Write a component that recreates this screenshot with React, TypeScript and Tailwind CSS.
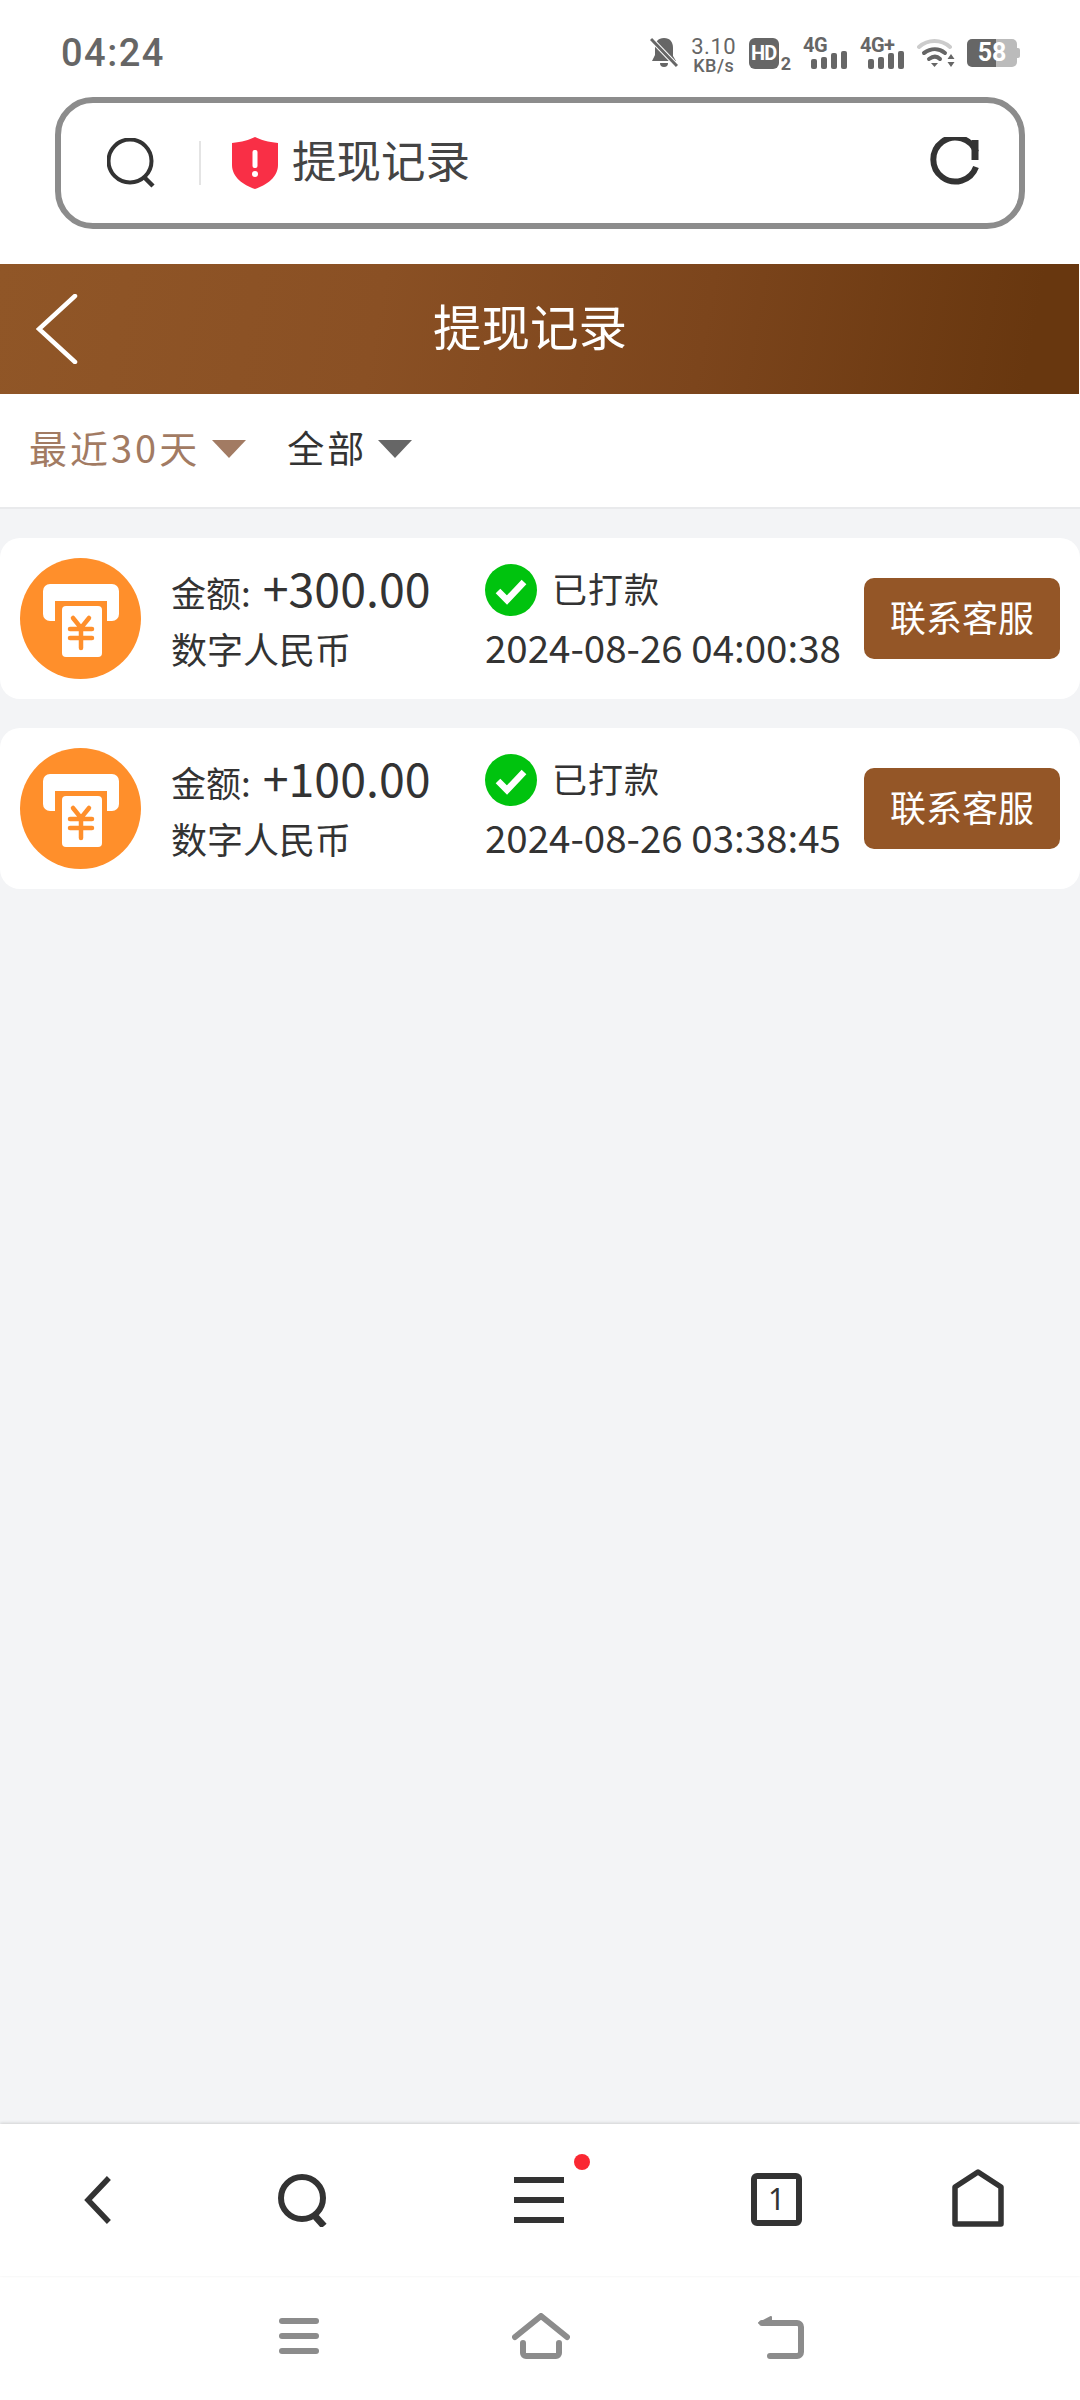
const FONT = "font-['Noto_Sans_CJK_SC','Noto_Sans',sans-serif]";

function SignalBars() {
  return (
    <svg width="36" height="18" viewBox="0 0 36 18" fill="#666">
      <rect x="0" y="8" width="6" height="10" rx="2" />
      <rect x="10" y="6" width="6" height="12" rx="2" />
      <rect x="20" y="2" width="6" height="16" rx="2" />
      <rect x="30" y="0" width="6" height="18" rx="2" />
    </svg>
  );
}

function StatusBar() {
  return (
    <div className="flex items-center h-[97px] pl-[61px] pr-[60px] pt-[9px] text-[#666] font-['Roboto',sans-serif]">
      <span className="text-[38px] leading-none font-medium tracking-[1.5px]">04:24</span>
      <div className="ml-auto flex items-center">
        <svg width="28" height="32" viewBox="0 0 28 32" fill="#666">
          <path d="M14 1c6 0 9 4 9 10v8l3 5H2l3-6v-7c0-6 3-10 9-10z" />
          <path d="M10 26h8a4 4 0 0 1-8 0z" />
          <path d="M1 2l26 27" stroke="#fff" strokeWidth="5" />
          <path d="M1 2l26 27" stroke="#666" strokeWidth="3" />
        </svg>
        <div className="ml-[13px] mt-[3px] flex flex-col items-center w-[46px] leading-none">
          <span className="text-[22px] leading-[19px] tracking-[0.5px]">3.10</span>
          <span className="mt-[2px] text-[18px] leading-[15px] font-medium tracking-[0.5px]">KB/s</span>
        </div>
        <div className="ml-[12px] w-[30px] h-[31px] rounded-[6px] bg-[#666] text-white text-[20px] font-bold leading-[31px] text-center tracking-[-1px]">
          HD
        </div>
        <span className="text-[18px] font-bold self-end leading-[17px] ml-[2px] mb-[1px]">2</span>
        <div className="ml-[12px] w-[44px] h-[31px] flex flex-col">
          <span className="text-[20px] leading-[14px] font-bold tracking-[-0.5px]">4G</span>
          <div className="self-end -mt-[1px]">
            <SignalBars />
          </div>
        </div>
        <div className="ml-[13px] w-[44px] h-[31px] flex flex-col">
          <span className="text-[20px] leading-[14px] font-bold tracking-[-0.5px]">4G+</span>
          <div className="self-end -mt-[1px]">
            <SignalBars />
          </div>
        </div>
        <svg className="ml-[13px]" width="38" height="30" viewBox="0 0 38 30" fill="none">
          <path d="M2 9C11 1 24 1 33 9" stroke="#ccc" strokeWidth="4" strokeLinecap="round" />
          <path d="M7 15c7-5 15-5 21 0" stroke="#666" strokeWidth="4" strokeLinecap="round" />
          <path d="M12 21c4-3 8-3 11 0" stroke="#666" strokeWidth="4" strokeLinecap="round" />
          <path d="M14 25h7l-3.500 4z" fill="#666" />
          <path d="M34 16l3.500 5h-7zM34 29l3.500-5h-7z" fill="#666" />
        </svg>
        <div className="ml-[12px] flex items-center">
          <div className="w-[50px] h-[28px] rounded-[5px] bg-[linear-gradient(90deg,#666_58%,#bbb_58%)] text-white text-[25px] font-bold leading-[28px] text-center">
            58
          </div>
          <div className="w-[3px] h-[10px] bg-[#bbb] rounded-r-[2px]" />
        </div>
      </div>
    </div>
  );
}

function AddressBar() {
  return (
    <div className="mx-[55px] h-[132px] border-[6px] border-[#8c8c8c] rounded-[38px] flex items-center">
      <svg className="ml-[46px]" width="50" height="50" viewBox="0 0 50 50" fill="none" stroke="#333" strokeWidth="4">
        <circle cx="23" cy="23" r="21.500" />
        <path d="M37 39l9 9" strokeWidth="4.500" />
      </svg>
      <div className="ml-[42px] w-[2px] h-[44px] bg-[#e4e4e4]" />
      <svg className="ml-[31px]" width="46" height="52" viewBox="0 0 46 52">
        <path d="M23 0c6 3 13 5 23 6v22c0 12-11 20-23 24C11 48 0 40 0 28V6c10-1 17-3 23-6z" fill="#f92f46" />
        <rect x="20.500" y="13" width="5" height="18" rx="2" fill="#fff" />
        <circle cx="23" cy="37" r="3" fill="#fff" />
      </svg>
      <span className={`ml-[14px] pb-[8px] text-[44.500px] leading-none text-[#444] ${FONT}`}>提现记录</span>
      <svg className="ml-auto mr-[40px]" width="50" height="52" viewBox="0 0 50 52" fill="none" stroke="#333" strokeWidth="6">
        <path d="M47 15A22 22 0 1 0 47 30" />
        <path d="M46 3v20" strokeWidth="7" />
      </svg>
    </div>
  );
}

function Header() {
  return (
    <div className="mt-[35px] h-[130px] w-[1079px] flex items-center bg-[linear-gradient(100deg,#905627_0%,#8a5024_35%,#7c451c_65%,#68370f_95%)]">
      <svg className="ml-[36px]" width="42" height="70" viewBox="0 0 42 70" fill="none" stroke="#fff" strokeWidth="4.500" strokeLinecap="round">
        <path d="M39 2L3 35l36 33" />
      </svg>
      <span className={`ml-[355px] pb-[8px] text-[48.500px] leading-none text-white ${FONT}`}>提现记录</span>
    </div>
  );
}

function Caret({ color }: { color: string }) {
  return (
    <svg width="34" height="18" viewBox="0 0 34 18">
      <path d="M0 0h34L17 18z" fill={color} />
    </svg>
  );
}

function Filters() {
  return (
    <div className={`h-[115px] bg-white border-b-[2px] border-[#e9eaec] flex items-center pl-[29px] pb-[4px] ${FONT}`}>
      <span className="text-[38px] leading-none text-[#a27b63] tracking-[3px] pb-[3px]">最近30天</span>
      <div className="ml-[12px]">
        <Caret color="#a27b63" />
      </div>
      <span className="ml-[41px] text-[37px] leading-none text-[#333] tracking-[3px] pb-[3px]">全部</span>
      <div className="ml-[11px]">
        <Caret color="#666" />
      </div>
    </div>
  );
}

function AtmIcon() {
  return (
    <svg className="shrink-0" width="121" height="121" viewBox="0 0 121 121">
      <circle cx="60.500" cy="60.500" r="60.500" fill="#ff8f2b" />
      <rect x="23" y="26" width="76" height="37" rx="7" fill="#fff" />
      <rect x="35" y="43" width="52" height="22" fill="#ff8f2b" />
      <rect x="42" y="48" width="40" height="51" rx="4" fill="#fff" />
      <path d="M53 60l8 10 8-10M50 71h22M50 80h22M61 70v20" fill="none" stroke="#ff8f2b" strokeWidth="4.500" strokeLinecap="round" />
    </svg>
  );
}

function CheckIcon() {
  return (
    <svg className="shrink-0" width="52" height="52" viewBox="0 0 52 52">
      <circle cx="26" cy="26" r="26" fill="#00c30e" />
      <path d="M13 27l9 9 17-18" fill="none" stroke="#fff" strokeWidth="6.500" />
    </svg>
  );
}

function RecordCard({ amount, time }: { amount: string; time: string }) {
  return (
    <div className={`h-[161px] bg-white rounded-[20px] flex items-center pl-[20px] pr-[20px] text-[#333] ${FONT}`}>
      <AtmIcon />
      <div className="ml-[30px] w-[314px] flex flex-col">
        <div className="flex items-baseline h-[58px] -mt-[2px]">
          <span className="text-[35px] leading-[58px]">金额:</span>
          <span className="ml-[12px] text-[46.500px] leading-[58px]">{amount}</span>
        </div>
        <span className="mt-[3px] text-[36px] leading-[58px]">数字人民币</span>
      </div>
      <div className="flex flex-col pb-[4px]">
        <div className="flex items-center">
          <CheckIcon />
          <span className="ml-[15px] pb-[4px] text-[35px] leading-[52px] tracking-[1px]">已打款</span>
        </div>
        <span className="mt-[2px] text-[38.500px] leading-[52px] whitespace-nowrap">{time}</span>
      </div>
      <button className="ml-auto w-[196px] h-[81px] pb-[5px] rounded-[10px] bg-[#945627] text-white text-[36px] leading-none">
        联系客服
      </button>
    </div>
  );
}

function BrowserNav() {
  return (
    <div className="h-[152px] bg-white flex items-center shadow-[0_-1px_3px_rgba(0,0,0,0.15)] relative">
      <svg className="ml-[84px]" width="30" height="48" viewBox="0 0 30 48" fill="none" stroke="#333" strokeWidth="5.500" strokeLinecap="square">
        <path d="M23 4L4 24l19 20" />
      </svg>
      <svg className="ml-[164px]" width="52" height="54" viewBox="0 0 52 54" fill="none" stroke="#333" strokeWidth="6">
        <circle cx="24" cy="25" r="21" />
        <path d="M36 42l10 11" strokeWidth="7" />
      </svg>
      <div className="ml-[184px] relative">
        <svg className="block" width="50" height="50" viewBox="0 0 50 50" fill="#333">
          <rect x="0" y="2" width="50" height="6" />
          <rect x="0" y="22" width="50" height="6" />
          <rect x="0" y="42" width="50" height="6" />
        </svg>
        <span className="absolute -top-[21px] -right-[26px] w-[16px] h-[16px] rounded-full bg-[#fa2832]" />
      </div>
      <div className="ml-[187px] -mt-[2px] w-[51px] h-[53px] rounded-[6px] border-[6px] border-[#333] flex items-center justify-center text-[30px] leading-none text-[#333] font-['Noto_Sans',sans-serif]">
        1
      </div>
      <svg className="ml-[150px] -mt-[5px]" width="52" height="58" viewBox="0 0 52 58" fill="none" stroke="#333" strokeWidth="5.500" strokeLinejoin="round">
        <path d="M26 3l23 15v37H3V18z" />
      </svg>
    </div>
  );
}

function SystemNav() {
  return (
    <div className="h-[124px] bg-white flex items-start pt-[37px]">
      <svg className="ml-[276px] mt-[5px]" width="46" height="37" viewBox="0 0 46 37" fill="#8c8c8c">
        <rect x="3" y="0" width="40" height="6" rx="3" />
        <rect x="3" y="15" width="40" height="6" rx="3" />
        <rect x="3" y="30" width="40" height="6" rx="3" />
      </svg>
      <svg className="ml-[190px]" width="58" height="46" viewBox="0 0 58 46" fill="none" stroke="#8c8c8c" strokeWidth="6" strokeLinecap="round" strokeLinejoin="round">
        <path d="M3 24L29 3l26 21" />
        <path d="M11 30v10a3 3 0 0 0 3 3h30a3 3 0 0 0 3-3V30" />
      </svg>
      <svg className="ml-[186px]" width="50" height="46" viewBox="0 0 50 46" fill="none" stroke="#8c8c8c" strokeWidth="6" strokeLinecap="round" strokeLinejoin="round">
        <path d="M6 10h35a4 4 0 0 1 4 4v25a4 4 0 0 1-4 4H14" />
        <path d="M3 10l12-6v8z" fill="#8c8c8c" strokeWidth="2" />
      </svg>
    </div>
  );
}

export default function App() {
  return (
    <div className="w-[1080px] h-[2400px] bg-white flex flex-col overflow-hidden">
      <StatusBar />
      <AddressBar />
      <Header />
      <Filters />
      <div className="flex-1 bg-[#f3f4f6] pt-[29px] flex flex-col gap-[29px]">
        <RecordCard amount="+300.00" time="2024-08-26 04:00:38" />
        <RecordCard amount="+100.00" time="2024-08-26 03:38:45" />
      </div>
      <BrowserNav />
      <SystemNav />
    </div>
  );
}
